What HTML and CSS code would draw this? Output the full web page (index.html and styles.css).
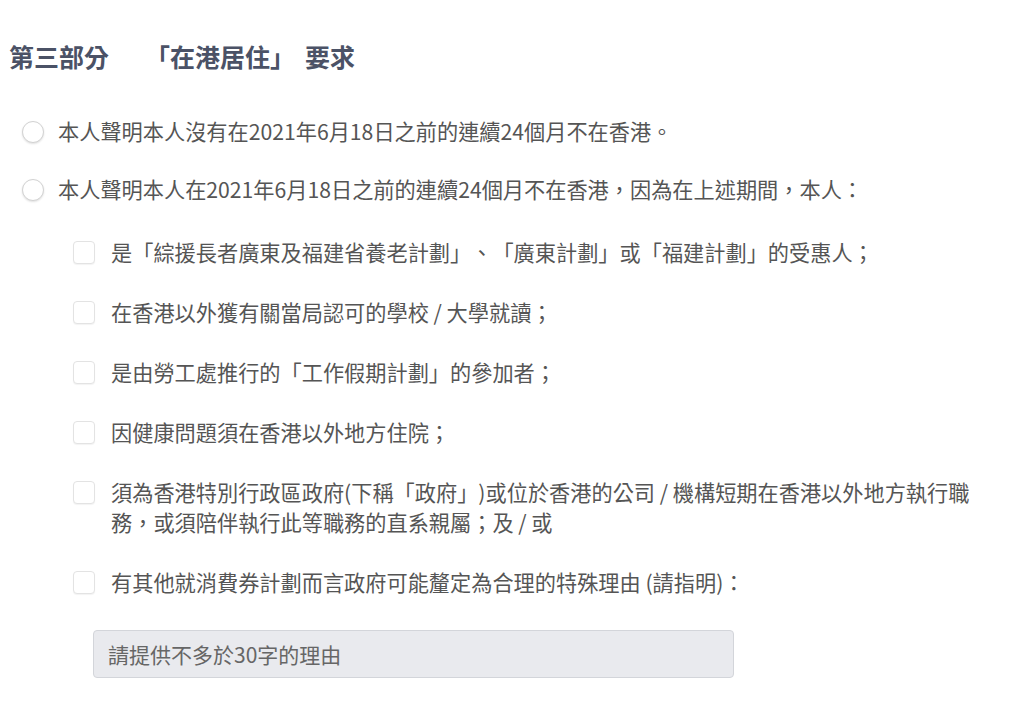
FILE: index.html
```html
<!DOCTYPE html>
<html lang="zh-Hant">
<head>
<meta charset="utf-8">
<link rel="stylesheet" href="styles.css">
</head>
<body>
<main class="page">
  <h2 class="section-title"><span class="part">第三部分</span><span class="name">「在港居住」</span><span class="req">要求</span></h2>
  <ul class="radio-list">
    <li class="opt"><span class="radio"></span><span class="label">本人聲明本人沒有在2021年6月18日之前的連續24個月不在香港。</span></li>
    <li class="opt"><span class="radio"></span><span class="label">本人聲明本人在2021年6月18日之前的連續24個月不在香港，因為在上述期間，本人：</span></li>
  </ul>
  <ul class="check-list">
    <li class="opt"><span class="check"></span><span class="label">是「綜援長者廣東及福建省養老計劃」、「廣東計劃」或「福建計劃」的受惠人；</span></li>
    <li class="opt"><span class="check"></span><span class="label">在香港以外獲有關當局認可的學校 / 大學就讀；</span></li>
    <li class="opt"><span class="check"></span><span class="label">是由勞工處推行的「工作假期計劃」的參加者；</span></li>
    <li class="opt"><span class="check"></span><span class="label">因健康問題須在香港以外地方住院；</span></li>
    <li class="opt"><span class="check"></span><span class="label">須為香港特別行政區政府(下稱「政府」)或位於香港的公司 / 機構短期在香港以外地方執行職務，或須陪伴執行此等職務的直系親屬；及 / 或</span></li>
    <li class="opt"><span class="check"></span><span class="label">有其他就消費券計劃而言政府可能釐定為合理的特殊理由 (請指明)：</span></li>
  </ul>
  <div class="reason">
    <input class="reason-input" type="text" placeholder="請提供不多於30字的理由">
  </div>
</main>
</body>
</html>
```
FILE: styles.css
```css
html, body {
  margin: 0;
  padding: 0;
  background: #ffffff;
}
body {
  font-family: "Noto Sans CJK TC", "Noto Sans CJK SC", "Noto Sans", sans-serif;
  color: #555555;
  text-spacing-trim: space-all;
}
.page {
  padding: 38px 10px 0 9px;
}
.section-title {
  margin: 0;
  font-size: 25px;
  line-height: 36px;
  font-weight: 700;
  color: #4b5266;
  display: flex;
}
.section-title .name {
  margin-left: 36px;
}
.section-title .req {
  margin-left: 10px;
}
.radio-list, .check-list {
  list-style: none;
  margin: 0;
  padding: 0;
  display: flex;
  flex-direction: column;
}
.radio-list {
  margin-top: 42px;
  gap: 28px;
  padding-left: 13px;
}
.check-list {
  margin-top: 33px;
  gap: 30px;
  padding-left: 64px;
}
.opt {
  display: flex;
  align-items: flex-start;
  font-size: 21.2px;
  line-height: 30px;
}
.radio {
  flex: none;
  width: 20px;
  height: 20px;
  margin-top: 5px;
  margin-right: 14px;
  border: 1px solid #d2d2d2;
  border-radius: 50%;
  background: #fff;
  box-shadow: 0 1px 2px rgba(0,0,0,0.12);
}
.check {
  flex: none;
  width: 20px;
  height: 21px;
  margin-top: 4px;
  margin-right: 16px;
  border: 1px solid #e3e3e3;
  border-radius: 4px;
  background: #fff;
  box-shadow: 0 1px 1px rgba(0,0,0,0.05);
}
.check-list .label {
  max-width: 870px;
}
.reason {
  margin-top: 33px;
  padding-left: 84px;
}
.reason-input {
  box-sizing: border-box;
  width: 641px;
  height: 48px;
  padding: 0 14px;
  border: 1px solid #d3d5da;
  border-radius: 4px;
  background: #e9eaee;
  font-family: inherit;
  font-size: 21px;
  color: #555;
  outline: none;
}
.reason-input::placeholder {
  color: #666666;
  opacity: 1;
}
```
